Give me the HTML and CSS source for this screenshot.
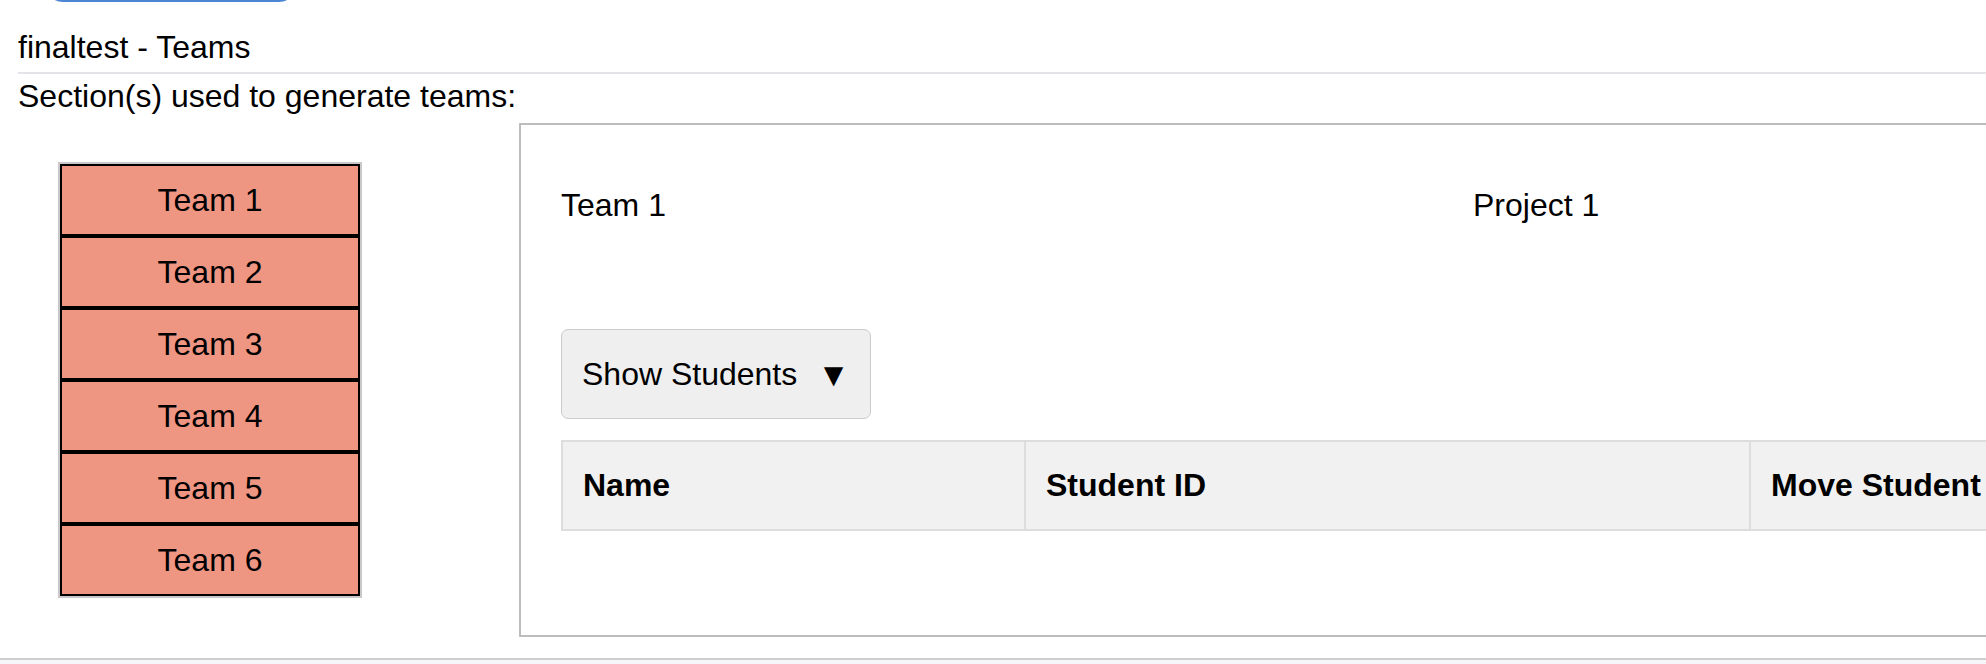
FILE: index.html
```html
<!DOCTYPE html>
<html lang="en">
<head>
<meta charset="utf-8">
<title>finaltest - Teams</title>
<link rel="stylesheet" href="styles.css">
</head>
<body>
<div class="page">
  <div class="top-btn"></div>
  <div class="title">finaltest - Teams</div>
  <div class="sections">Section(s) used to generate teams:</div>
  <div class="main">
    <div class="team-list">
      <div class="team-item">Team 1</div>
      <div class="team-item">Team 2</div>
      <div class="team-item">Team 3</div>
      <div class="team-item">Team 4</div>
      <div class="team-item">Team 5</div>
      <div class="team-item">Team 6</div>
    </div>
    <div class="panel">
      <div class="panel-head">
        <div>Team 1</div>
        <div>Project 1</div>
      </div>
      <button class="toggle" type="button"><span>Show Students</span><span class="caret">▼</span></button>
      <table class="students">
        <colgroup>
          <col class="c-name">
          <col class="c-id">
          <col class="c-move">
        </colgroup>
        <thead>
          <tr><th>Name</th><th>Student ID</th><th>Move Student</th></tr>
        </thead>
      </table>
    </div>
  </div>
</div>
<div class="footer"></div>
</body>
</html>
```
FILE: styles.css
```css
html, body {
  margin: 0;
  overflow: hidden;
  background: #fff;
}
body {
  font-family: "Liberation Sans", Arial, sans-serif;
  font-size: 32px;
  line-height: 37px;
  color: #000;
}
.page {
  padding-left: 18px;
}
.top-btn {
  box-sizing: border-box;
  width: 252px;
  height: 40px;
  margin: -38px 0 0 27px;
  border: 2px solid #4a86d4;
  border-radius: 18px;
}
.title {
  margin-top: 27px;
  padding-bottom: 6px;
  border-bottom: 2px solid #e3e3e8;
}
.sections {
  margin-top: 4px;
}
.main {
  display: flex;
  align-items: flex-start;
}
.team-list {
  box-sizing: border-box;
  flex: 0 0 auto;
  width: 304px;
  margin: 47px 0 0 40px;
  border: 2px solid #c8c8c8;
}
.team-item {
  box-sizing: border-box;
  height: 72px;
  border: 2px solid #000;
  background: #ef9683;
  display: flex;
  align-items: center;
  justify-content: center;
}
.panel {
  flex: 0 0 auto;
  width: 2200px;
  margin: 8px 0 0 157px;
  border: 2px solid #bdbdbd;
  padding: 62px 40px 104px;
}
.panel-head {
  display: grid;
  grid-template-columns: 912px 1fr;
}
.toggle {
  box-sizing: border-box;
  display: flex;
  align-items: center;
  width: 310px;
  height: 90px;
  margin-top: 105px;
  padding: 0 20px;
  border: 1px solid #cccccc;
  border-radius: 7px;
  background: #efefef;
  font: inherit;
  color: #000;
}
.caret {
  margin-left: 20px;
  font-size: 33px;
}
.students {
  margin-top: 21px;
  border-collapse: collapse;
  table-layout: fixed;
  width: 2101px;
}
.c-name { width: 463px; }
.c-id { width: 725px; }
.c-move { width: 913px; }
.students th {
  text-align: left;
  font-weight: bold;
  padding: 25px 20px;
  background: #f1f1f1;
  border: 2px solid #dddddd;
}
.footer {
  margin-top: 21px;
  height: 20px;
  border-top: 2px solid #cfcfcf;
  background: #f6f6f8;
}
```
